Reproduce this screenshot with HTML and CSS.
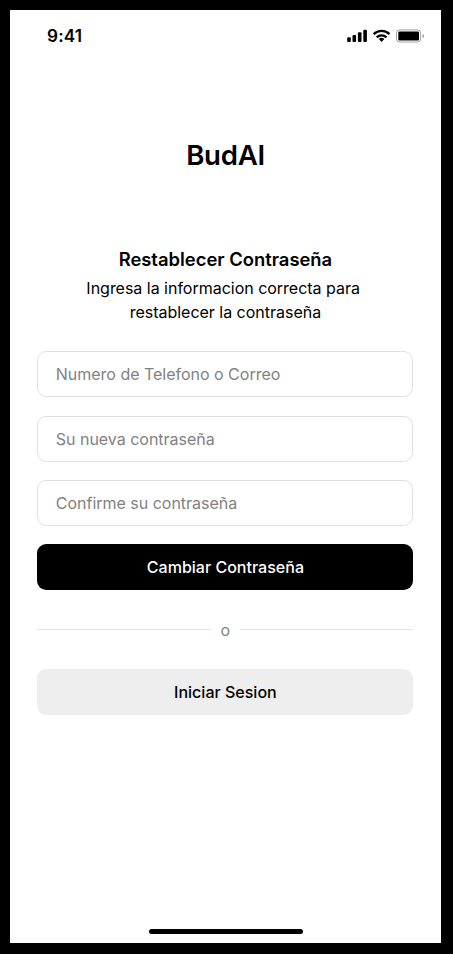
FILE: index.html
```html
<!DOCTYPE html>
<html lang="es">
<head>
<meta charset="utf-8">
<title>BudAI</title>
<link rel="stylesheet" href="styles.css">
</head>
<body>
<main class="screen">
  <header class="status">
    <span class="time">9:41</span>
    <svg class="indicators" width="78" height="14" viewBox="0 0 78 14" aria-hidden="true">
      <rect x="0.2" y="8.3" width="3.6" height="4.7" rx="1"/>
      <rect x="5.5" y="6" width="3.6" height="7" rx="1"/>
      <rect x="10.9" y="3.3" width="3.6" height="9.7" rx="1"/>
      <rect x="16.3" y="0.7" width="3.6" height="12.3" rx="1"/>
      <g fill="none" stroke="#000" stroke-width="2.4">
        <path d="M26.7 5.1a11.4 11.4 0 0 1 15.8 0"/>
        <path d="M29.7 8.3a7.1 7.1 0 0 1 9.8 0"/>
      </g>
      <path d="M34.6 13l-2.8-2.9a4.2 4.2 0 0 1 5.6 0z"/>
      <rect x="49.5" y="0.9" width="24.2" height="12.1" rx="3" fill="none" stroke="#000" stroke-opacity=".36"/>
      <rect x="51.3" y="2.6" width="20.7" height="8.8" rx="1.2"/>
      <path d="M75.6 4.7v4.6c1.9-.8 1.9-3.8 0-4.6z" opacity=".4"/>
    </svg>
  </header>
  <h1 class="brand">BudAI</h1>
  <form class="form">
    <h2 class="title">Restablecer Contraseña</h2>
    <p class="intro">Ingresa la informacion correcta para&nbsp;<br>restablecer la contraseña</p>
    <input class="field" type="text" placeholder="Numero de Telefono o Correo">
    <input class="field" type="text" placeholder="Su nueva contraseña">
    <input class="field" type="text" placeholder="Confirme su contraseña">
    <button class="button primary" type="button">Cambiar Contraseña</button>
    <div class="divider"><span>o</span></div>
    <button class="button secondary" type="button">Iniciar Sesion</button>
  </form>
  <div class="home"></div>
</main>
</body>
</html>
```
FILE: styles.css
```css
* { box-sizing: border-box; }

body {
  margin: 0;
  background: #000;
  font-family: Inter, sans-serif;
  color: #000;
}

.screen {
  display: flex;
  flex-direction: column;
  width: 431px;
  height: 933px;
  margin: 10px;
  background: #fff;
}

.status {
  display: flex;
  justify-content: space-between;
  align-items: center;
  height: 52px;
  padding: 0 16px 0 37px;
}

.time {
  margin-bottom: 2px;
  font-size: 17.2px;
  font-weight: 600;
  letter-spacing: 0.15px;
}

.brand {
  margin: 72px 0 0;
  height: 42px;
  line-height: 42px;
  text-align: center;
  font-size: 27.6px;
  font-weight: 600;
  letter-spacing: -0.28px;
}

.form {
  display: flex;
  flex-direction: column;
  margin: 70px 27.6px 0 27.4px;
}

.title {
  margin: 0;
  line-height: 27.5px;
  text-align: center;
  font-size: 18.4px;
  font-weight: 600;
}

.intro {
  margin: 2px 0 27.4px;
  line-height: 24.2px;
  text-align: center;
  font-size: 16.05px;
  letter-spacing: -0.03px;
}

.field,
.button {
  height: 46px;
  border-radius: 9.2px;
  font: 400 16.05px/24px Inter, sans-serif;
}

.field {
  width: 100%;
  margin: 0 0 18.4px;
  padding: 0 17.4px;
  border: 1.15px solid #e0e0e0;
  background: #fff;
  letter-spacing: -0.03px;
}

.field::placeholder {
  color: #828282;
  opacity: 1;
}

.button {
  padding: 0;
  border: 0;
  font-weight: 500;
}

.primary { background: #000; color: #fff; }
.secondary { background: #eee; color: #000; }

.divider {
  display: flex;
  align-items: center;
  gap: 10px;
  height: 24px;
  margin: 27.3px 0;
  color: #828282;
  font-size: 16.1px;
}

.divider::before,
.divider::after {
  content: "";
  flex: 1;
  height: 1px;
  background: #e6e6e6;
}

.home {
  width: 154px;
  height: 5.8px;
  margin: auto auto 8.6px 139px;
  border-radius: 3px;
  background: #000;
}
```
